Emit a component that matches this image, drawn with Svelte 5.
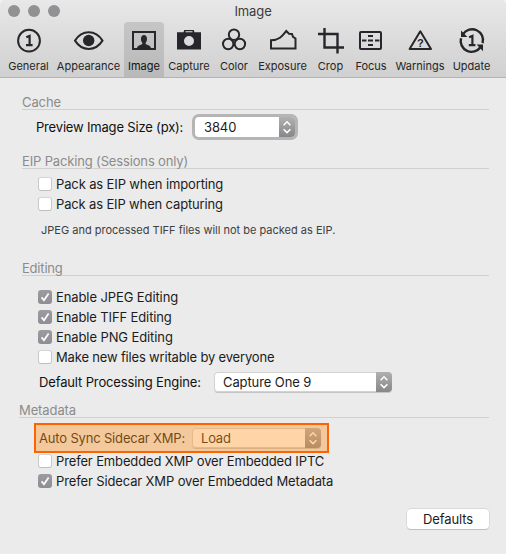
<script>
  const tabs = [
    { name: 'General', x: 4, w: 49 },
    { name: 'Appearance', x: 53, w: 71 },
    { name: 'Image', x: 124, w: 40 },
    { name: 'Capture', x: 164, w: 50 },
    { name: 'Color', x: 214, w: 40 },
    { name: 'Exposure', x: 254, w: 57 },
    { name: 'Crop', x: 311, w: 39 },
    { name: 'Focus', x: 350, w: 42 },
    { name: 'Warnings', x: 392, w: 56 },
    { name: 'Update', x: 448, w: 47 }
  ];
  let active = $state('Image');
</script>

{#snippet check(label, on, ls)}
  <label class="check">
    <span class="box" class:on>
      {#if on}<svg width="14" height="14" viewBox="0 0 14 14"><path d="M3.6 7.4 6 10.3 10.6 3.6" /></svg>{/if}
    </span>
    <span style:letter-spacing="{ls}px">{label}</span>
  </label>
{/snippet}

{#snippet select(value, width, ls, focused)}
  <div class="select" class:focused style:width="{width}px">
    <span class="value" style:letter-spacing="{ls}px">{value}</span>
    <span class="arrows">
      <svg width="16" height="20" viewBox="0 0 16 20"><path d="M4.6 8.2 8 4.8l3.4 3.4M4.6 12.2 8 15.6l3.4-3.4" /></svg>
    </span>
  </div>
{/snippet}

<div class="window">
  <header>
    <div class="titlebar">
      <div class="lights"><i></i><i></i><i></i></div>
      <div class="title">Image</div>
    </div>
    <nav>
      {#each tabs as t}
        <button class="tab" class:active={active === t.name} style:width="{t.w}px" onclick={() => (active = t.name)}>
          <svg class="icon" width={t.w} height="32" viewBox="{t.x} 25 {t.w} 32">
            {#if t.name === 'General'}
              <circle cx="29" cy="40.7" r="10.9" />
              <path class="one" d="M26.300 37.300 29.600 35.900V45M26 45.200h6.600" />
            {:else if t.name === 'Appearance'}
              <path d="M75 40.6C82 29.5 95.500 29.500 102.500 40.600C95.500 51.700 82 51.700 75 40.600Z" />
              <circle class="solid" cx="88.700" cy="40.500" r="5.700" />
            {:else if t.name === 'Image'}
              <rect x="133" y="32" width="22" height="17" />
              <path class="solid" d="M137 48.500c.2-3 2.500-3.300 5.300-4.300v-1.500c-2-2-2-7.700 1.700-7.700s3.700 5.700 1.700 7.700v1.500c2.800 1 5.100 1.300 5.300 4.300z" />
            {:else if t.name === 'Capture'}
              <path class="solid" fill-rule="evenodd" d="M177 32.300h6.500l.7-2.300h9.600l.7 2.300h6.500v17.200h-24zM185.500 31.300v1h7v-1zM189 36a5 5 0 1 0 0 10a5 5 0 1 0 0-10z" />
            {:else if t.name === 'Color'}
              <circle cx="234" cy="34.700" r="5.200" />
              <circle cx="228.200" cy="44" r="5.200" />
              <circle cx="239.900" cy="44" r="5.200" />
            {:else if t.name === 'Exposure'}
              <path d="M271 40.300V48.500H295.500V38.500L293 36.800L292 34L289 33.800L286.300 31C283 35 280 40.300 271 40.300Z" />
            {:else if t.name === 'Crop'}
              <path class="thick" d="M324.500 28V47.500H344M318 34H337.500V53.500" />
            {:else if t.name === 'Focus'}
              <rect x="360" y="32" width="21" height="17" rx="1" />
              <path d="M362 40.500h4.500M368 40.500h5M375 40.500h4.500M368 36h5M368 45h5" />
            {:else if t.name === 'Warnings'}
              <path stroke-linejoin="round" d="M420.300 31.300 409.600 49H431z" />
              <text x="420.300" y="46.900" font-size="11">?</text>
            {:else}
              <path class="thick" d="M463 34.200A10.900 10.900 0 0 1 482.600 43.200M480.600 47A10.900 10.900 0 0 1 461 38.200" />
              <path class="solid" d="M461 30.400v6.600h6.400zM483 51.200v-6.600h-6.400z" />
              <path class="one" d="M469.100 37.300 472.400 35.900V45M468.800 45.200h6.600" />
            {/if}
          </svg>
          <span>{t.name}</span>
        </button>
      {/each}
    </nav>
  </header>

  <main>
    <section class="cache">
      <h2 style:letter-spacing="-0.1px">Cache</h2>
      <div class="row size">
        <span class="caption" style:letter-spacing="-0.18px">Preview Image Size (px):</span>
        {@render select('3840', 100, -0.1, true)}
      </div>
    </section>

    <section class="eip">
      <h2 style:letter-spacing="-0.15px">EIP Packing (Sessions only)</h2>
      {@render check('Pack as EIP when importing', false, -0.13)}
      {@render check('Pack as EIP when capturing', false, -0.15)}
      <p>JPEG and processed TIFF files will not be packed as EIP.</p>
    </section>

    <section class="editing">
      <h2 style:letter-spacing="-0.2px">Editing</h2>
      {@render check('Enable JPEG Editing', true, -0.1)}
      {@render check('Enable TIFF Editing', true, -0.12)}
      {@render check('Enable PNG Editing', true, -0.1)}
      {@render check('Make new files writable by everyone', false, -0.17)}
      <div class="row engine">
        <span class="caption" style:letter-spacing="-0.14px">Default Processing Engine:</span>
        {@render select('Capture One 9', 178, -0.1, false)}
      </div>
    </section>

    <section class="metadata">
      <h2 style:letter-spacing="-0.1px">Metadata</h2>
      <div class="row sync">
        <span class="caption" style:letter-spacing="-0.17px">Auto Sync Sidecar XMP:</span>
        {@render select('Load', 129, -0.2, false)}
        <div class="highlight"></div>
      </div>
      {@render check('Prefer Embedded XMP over Embedded IPTC', false, -0.14)}
      {@render check('Prefer Sidecar XMP over Embedded Metadata', true, -0.13)}
    </section>

    <footer><button class="defaults">Defaults</button></footer>
  </main>
</div>

<style>
  :global(body) { background: #f4f4f4; }
  .window {
    width: 506px; height: 554px; box-sizing: border-box; overflow: hidden;
    background: #ebebeb; border-radius: 5px 5px 0 0;
    font: 13px/20px Inter, "Liberation Sans", sans-serif; color: #1c1c1c;
  }
  header { height: 78px; box-sizing: border-box; border-bottom: 1px solid #b3b3b3; background: linear-gradient(#e8e8e8, #d0d0d0); }
  .titlebar { display: flex; align-items: center; height: 22px; }
  .lights { display: flex; gap: 8px; width: 53px; padding-left: 8px; }
  .lights i { width: 12px; height: 12px; border-radius: 50%; background: #919193; }
  .title { flex: 1; padding-right: 61px; text-align: center; color: #3c3c3c; letter-spacing: -0.1px; }
  nav { display: flex; height: 55px; padding-left: 4px; }
  button { font: inherit; color: inherit; border: 0; margin: 0; padding: 0; background: none; }
  .tab { display: flex; flex-direction: column; align-items: center; padding-top: 3px; font-size: 11px; line-height: 18px; color: #262626; white-space: nowrap; }
  .tab.active { background: linear-gradient(#c6c6c6, #b9b9b9); border-radius: 4px 4px 0 0; color: #111; }
  .icon { display: block; fill: none; stroke: #26262b; stroke-width: 2; }
  .icon .solid { fill: #26262b; stroke: none; }
  .icon .thick { stroke-width: 2.4; }
  .icon .one { stroke-width: 2.2; }
  .icon text { font-family: "Liberation Sans", sans-serif; font-weight: 700; text-anchor: middle; fill: #26262b; stroke: none; }

  main { padding: 14px 17px 0 22px; }
  h2 { height: 17px; margin: 0; line-height: 20px; font-size: 13px; font-weight: 400; color: #8b8b8b; border-bottom: 1px solid #d0d0d0; }
  .row { display: flex; align-items: center; height: 20px; }
  .caption { white-space: nowrap; color: #111; flex: none; }
  .cache { height: 59px; }
  .size { padding: 7px 0 0 14px; }
  .size .caption { width: 159px; }
  .eip { height: 107px; }
  .eip h2, .editing h2 { margin-bottom: 5px; }
  .check { display: flex; align-items: center; gap: 4px; height: 20px; padding-left: 16px; white-space: nowrap; }
  .box { display: block; width: 14px; height: 14px; box-sizing: border-box; flex: none; border: 1px solid #c9c9c9; border-top-color: #d4d4d4; border-bottom-color: #bfbfbf; border-radius: 3px; background: #fff; }
  .box.on { border: 0; background: linear-gradient(#9c9ca0, #8d8d93); }
  .box svg { display: block; fill: none; stroke: #fff; stroke-width: 1.7; }
  p { margin: 6px 0 0 19px; line-height: 20px; font-size: 11px; color: #404040; white-space: nowrap; }
  .editing { height: 142px; }
  .editing h2 { margin-bottom: 11px; }
  .engine { padding: 5px 0 0 17px; }
  .engine .caption { width: 175px; }
  .metadata { height: 109px; }
  .metadata h2 { margin-left: -3px; }
  .sync { position: relative; padding: 10px 0 3px 17px; }
  .sync .caption { width: 153px; }
  .highlight { position: absolute; left: 12px; top: 5px; width: 295px; height: 30px; box-sizing: border-box; border: 2px solid #ff6200; background: rgba(255, 150, 35, .4); }

  .select { display: flex; height: 20px; box-sizing: border-box; border-radius: 4px; background: #fff; box-shadow: inset 0 0 0 1px #d2d2d2, 0 1px 0 #c4c4c4; overflow: hidden; flex: none; }
  .select.focused { box-shadow: 0 0 0 3px #b5b5b6; }
  .value { flex: 1; padding-left: 9px; white-space: nowrap; }
  .arrows { width: 16px; background: linear-gradient(#b0b0b2, #87878b); }
  .arrows svg { display: block; fill: none; stroke: #fff; stroke-width: 1.5; }
  footer { display: flex; justify-content: flex-end; }
  .defaults { width: 82px; height: 20px; border-radius: 4px; background: #fff; box-shadow: 0 0 0 .5px #c8c8c8, 0 1px 0 #b8b8b8; letter-spacing: -0.1px; }
</style>
